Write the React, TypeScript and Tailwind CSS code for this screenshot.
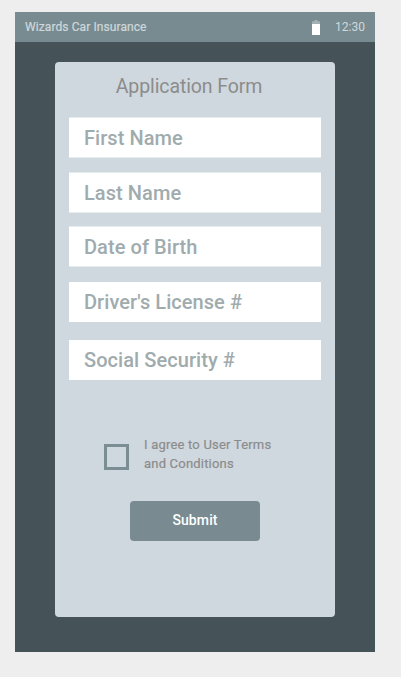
import React from "react";

interface Field {
  label: string;
  box: string;
}

const fields: Field[] = [
  { label: "First Name", box: "h-[41px] border-y border-[#e7ecef] pt-px" },
  { label: "Last Name", box: "mt-[14px] h-[41px] border-y border-[#e7ecef] pt-px" },
  { label: "Date of Birth", box: "mt-[13px] h-[41px] border-y border-[#e7ecef] pt-px" },
  { label: "Driver's License #", box: "mt-[15px] h-[40px]" },
  { label: "Social Security #", box: "mt-[18px] h-[40px]" },
];

function BatteryIcon() {
  return (
    <svg width="8" height="15" viewBox="0 0 8 15">
      <path d="M2.5 0h3v1.2H8V4.5H0V1.2h2.5z" fill="#a3b0b4" />
      <rect y="4" width="8" height="11" fill="#fff" />
    </svg>
  );
}

function StatusBar() {
  return (
    <header className="flex h-[30px] items-center justify-between bg-[#788b90] px-[10px] text-[12px] text-[#cfd8dc]">
      <span className="leading-[31px] font-normal tracking-[0.09px] [-webkit-text-stroke:0.2px_#cfd8dc]">
        Wizards Car Insurance
      </span>
      <div className="flex items-center">
        <BatteryIcon />
        <span className="ml-[15px] leading-[31px] font-normal">12:30</span>
      </div>
    </header>
  );
}

export default function App() {
  return (
    <div className="h-[677px] w-[401px] bg-[#eeeeee] pt-[12px] pl-[15px] font-[Roboto,sans-serif]">
      <main className="h-[640px] w-[360px] bg-[#455257]">
        <StatusBar />
        <form className="mx-auto mt-[20px] h-[555px] w-[280px] rounded-[4px] bg-[#cfd8de] px-[14px]">
          <h1 className="h-[55px] pr-[12px] text-center text-[19.5px] leading-[49px] font-normal tracking-[-0.1px] text-[#8c8c8c]">
            Application Form
          </h1>
          {fields.map(({ label, box }) => (
            <input
              key={label}
              type="text"
              placeholder={label}
              aria-label={label}
              className={`block w-full bg-white px-[15px] text-[20px] font-medium tracking-[0.06px] text-[#a0abae] placeholder:text-[#a0abae] ${box}`}
            />
          ))}
          <label className="mt-[55px] ml-[34.5px] flex h-[38px] items-start">
            <input
              type="checkbox"
              className="mt-[9px] size-[25.5px] shrink-0 appearance-none border-3 border-[#7b8e93]"
            />
            <span className="ml-[15px] text-[13px] leading-[19px] font-normal tracking-[0.2px] text-[#8c8c8c] [-webkit-text-stroke:0.2px_#8c8c8c]">
              I agree to User Terms
              <br />
              and Conditions
            </span>
          </label>
          <button
            type="button"
            className="mx-auto mt-[28px] block h-[40px] w-[130px] rounded-[4px] bg-[#798b90] pb-[2px] text-[14px] font-medium tracking-[0.1px] text-white"
          >
            Submit
          </button>
        </form>
      </main>
    </div>
  );
}
